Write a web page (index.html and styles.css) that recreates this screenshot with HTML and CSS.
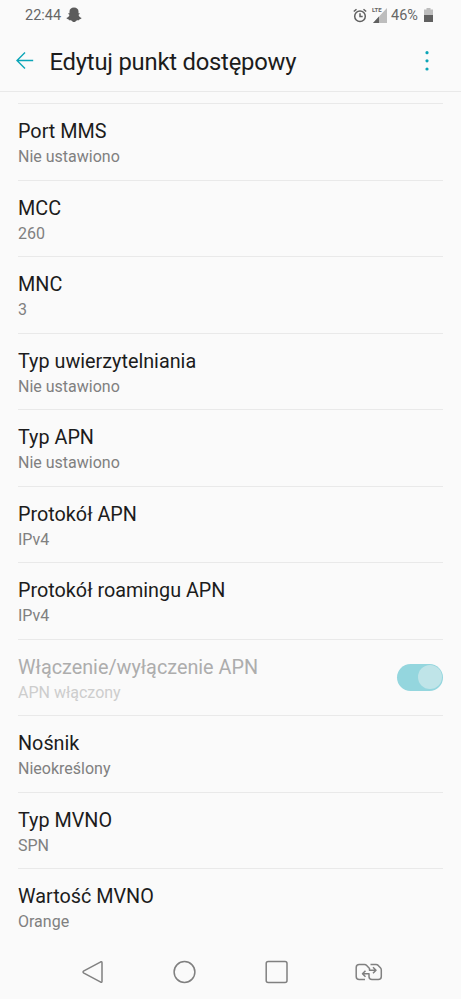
FILE: index.html
```html
<!DOCTYPE html>
<html lang="pl">
<head>
<meta charset="utf-8">
<title>Edytuj punkt dostępowy</title>
<link rel="stylesheet" href="styles.css">
</head>
<body>
<div class="status">
  <span class="clock">22:44</span>
  <svg class="ghost" width="16" height="16" viewBox="0 0 16 16"><path d="M8 .6C5.200.6 3.500 2.300 3.500 4.500V6.200C2.800 6 2 6.200 2.100 6.800 2.200 7.300 3.200 7.500 3.400 7.900 3.200 9.200 2 10.500.4 11 .4 12 2.300 12.100 2.700 12.400L3 13.300C4.300 13.200 5 13.200 5.700 13.700 6.500 14.300 7 15.100 8 15.100S9.500 14.300 10.300 13.700C11 13.200 11.700 13.200 13 13.300L13.300 12.400C13.700 12.100 15.600 12 15.600 11 14 10.500 12.800 9.200 12.600 7.900 12.800 7.500 13.800 7.300 13.900 6.800 14 6.200 13.200 6 12.500 6.200V4.500C12.500 2.300 10.800.6 8 .6Z"/></svg>
  <svg class="alarm" width="14" height="15" viewBox="0 0 14 15"><circle cx="7" cy="8.300" r="5.300"/><path d="M7 5.200V8.500H9.700M.8 3.500 3.500 1.200M13.200 3.500 10.500 1.200"/></svg>
  <div class="signal">
    <svg width="14" height="15" viewBox="0 0 14 15"><path class="pale" d="M14 0V15H0Z"/><path class="dark" d="M6 8.600V15H0Z"/></svg>
    <span class="lte">LTE</span>
  </div>
  <span class="percent">46%</span>
  <svg class="battery" width="9" height="14" viewBox="0 0 9 14"><path class="pale" d="M2.500 0H6.500V1.500H9V7H0V1.500H2.500Z"/><path class="dark" d="M0 7H9V14H0Z"/></svg>
</div>
<header class="bar">
  <svg class="back" width="18" height="18" viewBox="0 0 18 18"><path d="M17.200 8.500H1.200M9 .5 1 8.500 9 16.500"/></svg>
  <h1>Edytuj punkt dostępowy</h1>
  <svg class="more" width="4" height="20" viewBox="0 0 4 20"><circle cx="2" cy="1.700" r="1.600"/><circle cx="2" cy="9.800" r="1.600"/><circle cx="2" cy="18" r="1.600"/></svg>
</header>
<main class="list">
  <div class="row"><div class="text"><b>Port MMS</b><span>Nie ustawiono</span></div></div>
  <div class="row"><div class="text"><b>MCC</b><span>260</span></div></div>
  <div class="row"><div class="text"><b>MNC</b><span>3</span></div></div>
  <div class="row"><div class="text"><b>Typ uwierzytelniania</b><span>Nie ustawiono</span></div></div>
  <div class="row"><div class="text"><b>Typ APN</b><span>Nie ustawiono</span></div></div>
  <div class="row"><div class="text"><b>Protokół APN</b><span>IPv4</span></div></div>
  <div class="row"><div class="text"><b>Protokół roamingu APN</b><span>IPv4</span></div></div>
  <div class="row disabled"><div class="text"><b>Włączenie/wyłączenie APN</b><span>APN włączony</span></div><div class="switch"><div class="knob"></div></div></div>
  <div class="row"><div class="text"><b>Nośnik</b><span>Nieokreślony</span></div></div>
  <div class="row"><div class="text"><b>Typ MVNO</b><span>SPN</span></div></div>
  <div class="row"><div class="text"><b>Wartość MVNO</b><span>Orange</span></div></div>
</main>
<nav class="nav">
  <svg width="92" height="26" viewBox="0 0 92 26"><path d="M54.800 2.800 37.900 11.900Q36.200 13 37.900 14.100L54.800 23.200Q56 23.700 56 22.300V3.700Q56 2.300 54.800 2.800Z"/></svg>
  <svg width="92" height="26" viewBox="0 0 92 26"><circle cx="46.500" cy="13" r="10.400"/></svg>
  <svg width="92" height="26" viewBox="0 0 92 26"><rect x="36.200" y="2.600" width="20.800" height="20.800" rx="2"/></svg>
  <svg width="92" height="26" viewBox="0 0 92 26"><path d="M43 20.500H37.200Q34.200 20.500 34.200 17.500V8.500Q34.200 5.500 37.200 5.500H42.500Q43.800 5.500 44.700 6.500L47.500 9.500V11.200H54M51 8.200 54 11.200 51 14.200M48.500 5.500H54Q55.300 5.500 56.200 6.400L58.400 8.800Q59.300 9.800 59.300 11V17.500Q59.300 20.500 56.300 20.500H50Q47 20.500 47 17.500V14.800H40.500M43.500 11.800 40.500 14.800 43.500 17.800"/></svg>
</nav>
</body>
</html>
```
FILE: styles.css
```css
* { box-sizing: border-box; }
body {
  margin: 0;
  width: 461px;
  height: 999px;
  overflow: hidden;
  display: flex;
  flex-direction: column;
  background: #fafafa;
  color: #1c1c1c;
  font-family: Roboto, "Noto Sans", sans-serif;
}
svg { display: block; flex: none; }
.status {
  height: 30px;
  padding: 0 28px 0 25px;
  display: flex;
  align-items: center;
  color: #666;
  font-size: 14.5px;
}
.clock { width: 41px; }
.ghost { fill: #5c5c5c; }
.alarm {
  margin-left: auto;
  fill: none;
  stroke: #606060;
  stroke-width: 1.5;
}
.signal { position: relative; margin-left: 6px; }
.lte {
  position: absolute;
  left: -1px;
  top: -2px;
  font-size: 6px;
  line-height: 7px;
  font-weight: 700;
}
.pale { fill: #bdbdbd; }
.dark { fill: #606060; }
.percent { margin-left: 4px; width: 33px; }
.bar {
  height: 62px;
  padding: 1px 32px 0 16px;
  display: flex;
  align-items: center;
  border-bottom: 1px solid #e9e9e9;
}
.back { fill: none; stroke: #0ba5b7; stroke-width: 1.4; }
h1 {
  margin: 1px 0 0 15.5px;
  font-size: 23.8px;
  font-weight: 400;
  line-height: 30px;
  letter-spacing: -0.22px;
  white-space: nowrap;
}
.more { margin-left: auto; fill: #0ba5b7; }
.list {
  flex: 1;
  margin: 11px 18px 0;
}
.row {
  height: 76.55px;
  border-top: 1px solid #e9e9e9;
  display: flex;
  justify-content: space-between;
  padding-top: 15px;
}
.text { display: flex; flex-direction: column; white-space: nowrap; }
.text b { font-size: 19.8px; font-weight: 400; line-height: 25px; }
.text span { font-size: 16px; line-height: 25px; color: #808080; }
.disabled .text b { color: #adadad; }
.disabled .text span { color: #cdcdcd; }
.switch {
  width: 46px;
  height: 27px;
  margin-top: 9px;
  padding: 1.500px;
  border-radius: 14px;
  background: #94d6de;
  display: flex;
  justify-content: flex-end;
}
.knob { width: 24px; height: 24px; border-radius: 50%; background: #bfe4e8; }
.nav {
  height: 54px;
  padding: 14px 0 0 46px;
  display: flex;
  fill: none;
  stroke: #808080;
  stroke-width: 1.5;
  stroke-linejoin: round;
}
```
